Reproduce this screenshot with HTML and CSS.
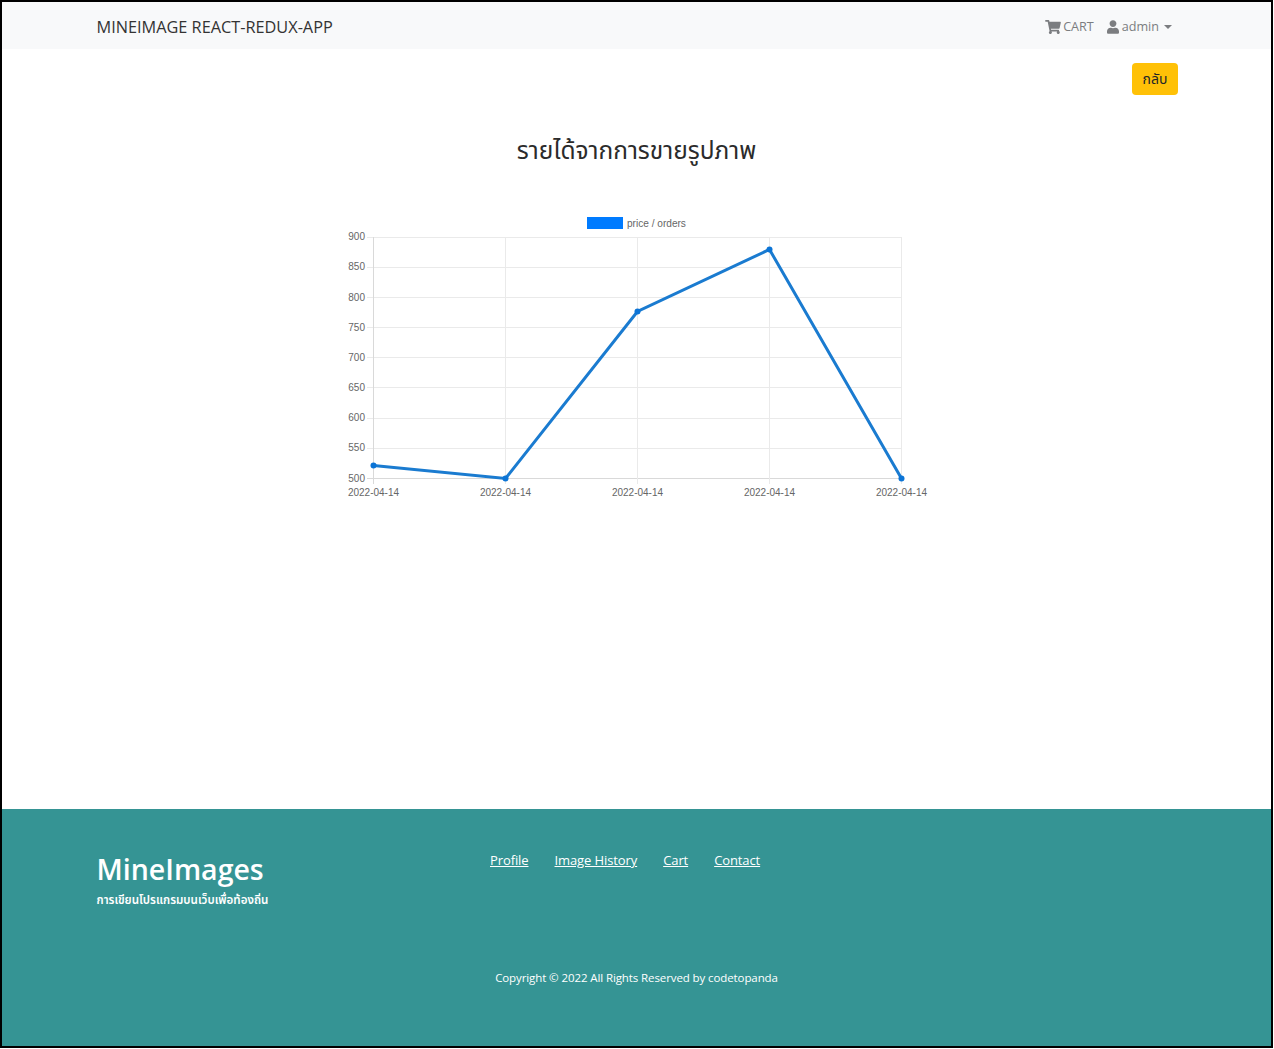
FILE: index.html
```html
<!DOCTYPE html>
<html>
  <head>
    <meta charset="UTF-8">
    <title>MineImages</title>
    <link rel="stylesheet" href="styles.css">
  </head>
  <body>
    <div class="frame">
      <nav class="navbar">
        <a class="brand" href="#">MINEIMAGE REACT-REDUX-APP</a>
        <div class="nav-links">
          <a class="nav-link" href="#">
            <svg class="nav-icon cart-icon" viewBox="0 0 576 512"><path fill="currentColor" d="M528.1 301.3l47.3-208C578.8 78.3 567.4 64 552 64H159.2l-9.2-44.8C147.8 8 137.9 0 126.5 0H24C10.7 0 0 10.7 0 24v16c0 13.3 10.7 24 24 24h69.9l70.2 343.4C147.300 417.100 136 435.200 136 456c0 30.900 25.100 56 56 56s56-25.100 56-56c0-15.700-6.400-29.800-16.800-40h209.600C430.400 426.200 424 440.300 424 456c0 30.900 25.100 56 56 56s56-25.100 56-56c0-22.200-12.900-41.300-31.600-50.400l5.500-24.300c3.400-15-8-29.300-23.400-29.300H218.100l-6.500-32h293.100c11.200 0 20.900-7.800 23.400-18.700z"/></svg>
            CART
          </a>
          <a class="nav-link" href="#">
            <svg class="nav-icon user-icon" viewBox="0 0 448 512"><path fill="currentColor" d="M224 256c70.700 0 128-57.300 128-128S294.700 0 224 0 96 57.300 96 128s57.300 128 128 128zm89.600 32h-16.700c-22.200 10.200-46.900 16-72.900 16s-50.600-5.800-72.900-16h-16.700C60.200 288 0 348.200 0 422.400V464c0 26.500 21.500 48 48 48h352c26.500 0 48-21.500 48-48v-41.600c0-74.200-60.200-134.400-134.400-134.400z"/></svg>
            admin
            <span class="caret"></span>
          </a>
        </div>
      </nav>

      <main class="content">
        <div class="back-row">
          <button class="btn-back">กลับ</button>
        </div>
        <h2 class="page-title">รายได้จากการขายรูปภาพ</h2>
        <svg class="chart" viewBox="0 0 600 300" width="600" height="300">
          <g class="legend">
            <rect x="253" y="4" width="36" height="12" fill="#007bff"/>
            <text class="legend-label" x="293" y="14">price / orders</text>
          </g>
          <g class="grid">
            <line x1="33" x2="567" y1="24.500" y2="24.500"/>
            <line x1="33" x2="567" y1="54.500" y2="54.500"/>
            <line x1="33" x2="567" y1="84.500" y2="84.500"/>
            <line x1="33" x2="567" y1="114.500" y2="114.500"/>
            <line x1="33" x2="567" y1="144.500" y2="144.500"/>
            <line x1="33" x2="567" y1="174.500" y2="174.500"/>
            <line x1="33" x2="567" y1="205.500" y2="205.500"/>
            <line x1="33" x2="567" y1="235.500" y2="235.500"/>
            <line class="axis" x1="33" x2="567" y1="265.500" y2="265.500"/>
            <line class="axis" x1="39.500" x2="39.500" y1="24" y2="271"/>
            <line x1="171.500" x2="171.500" y1="24" y2="271"/>
            <line x1="303.500" x2="303.500" y1="24" y2="271"/>
            <line x1="435.500" x2="435.500" y1="24" y2="271"/>
            <line x1="567.500" x2="567.500" y1="24" y2="271"/>
          </g>
          <g class="tick-labels y-labels">
            <text x="31" y="27">900</text>
            <text x="31" y="57">850</text>
            <text x="31" y="88">800</text>
            <text x="31" y="118">750</text>
            <text x="31" y="148">700</text>
            <text x="31" y="178">650</text>
            <text x="31" y="208">600</text>
            <text x="31" y="238">550</text>
            <text x="31" y="269">500</text>
          </g>
          <g class="tick-labels x-labels">
            <text x="39.500" y="283">2022-04-14</text>
            <text x="171.500" y="283">2022-04-14</text>
            <text x="303.500" y="283">2022-04-14</text>
            <text x="435.500" y="283">2022-04-14</text>
            <text x="567.500" y="283">2022-04-14</text>
          </g>
          <polyline class="line" points="39.500,252.500 171.500,265.500 303.500,98.500 435.500,36.500 567.500,265.500"/>
          <g class="points">
            <circle cx="39.500" cy="252.500" r="3"/>
            <circle cx="171.500" cy="265.500" r="3"/>
            <circle cx="303.500" cy="98.500" r="3"/>
            <circle cx="435.500" cy="36.500" r="3"/>
            <circle cx="567.500" cy="265.500" r="3"/>
          </g>
        </svg>
      </main>

      <footer class="footer">
        <div class="footer-top">
          <div class="footer-brand">
            <div class="footer-logo">MineImages</div>
            <div class="footer-tagline">การเขียนโปรแกรมบนเว็บเพื่อท้องถิ่น</div>
          </div>
          <div class="footer-links">
            <a href="#">Profile</a>
            <a href="#">Image History</a>
            <a href="#">Cart</a>
            <a href="#">Contact</a>
          </div>
        </div>
        <div class="copyright">Copyright © 2022 All Rights Reserved by codetopanda</div>
      </footer>
    </div>
  </body>
</html>
```

FILE: styles.css
```css
* {
  box-sizing: border-box;
}

html,
body {
  margin: 0;
  background: #fff;
}

body {
  font-family: "Open Sans", "Noto Sans", "Noto Sans Thai", sans-serif;
  color: #212529;
  height: 1049px;
  overflow: hidden;
}

.frame {
  height: 1048px;
  width: 1273px;
  border: 2px solid #000;
  display: flex;
  flex-direction: column;
}

/* navbar */
.navbar {
  height: 47px;
  background: #f8f9fa;
  display: flex;
  align-items: center;
  justify-content: space-between;
  padding: 2px 99px 0 94.500px;
}

.brand {
  font-size: 16.3px;
  color: #333;
  text-decoration: none;
}

.nav-links {
  display: flex;
  gap: 13px;
}

.nav-link {
  display: flex;
  align-items: center;
  font-size: 12.6px;
  color: #7b7d80;
  text-decoration: none;
}

.nav-icon {
  height: 14px;
  margin-right: 3px;
}

.cart-icon {
  width: 16px;
  margin-right: 2px;
}

.user-icon {
  width: 12px;
}

.caret {
  width: 0;
  height: 0;
  margin-left: 5px;
  border-top: 4px solid #7b7d80;
  border-left: 4px solid transparent;
  border-right: 4px solid transparent;
}

/* main */
.content {
  flex: 1;
  display: flex;
  flex-direction: column;
  align-items: center;
}

.back-row {
  align-self: stretch;
  display: flex;
  justify-content: flex-end;
  padding: 14px 93px 0 0;
}

.btn-back {
  width: 46px;
  height: 32px;
  padding: 0;
  background: #ffc107;
  border: none;
  border-radius: 4px;
  font-family: inherit;
  font-size: 14px;
  color: #212529;
}

.page-title {
  margin: 37px 0 0;
  height: 36px;
  font-size: 24.5px;
  line-height: 36px;
  font-weight: 400;
  color: #2b2b2b;
}

.chart {
  margin-top: 45px;
  margin-left: -5px;
}

.grid line {
  stroke: #eaeaea;
  stroke-width: 1;
}

.grid .axis {
  stroke: #d9d9d9;
}

.tick-labels text,
.legend-label {
  font-family: "Liberation Sans", sans-serif;
  font-size: 10px;
  fill: #666;
}

.legend-label {
  font-size: 10.1px;
}

.y-labels text {
  text-anchor: end;
}

.x-labels text {
  text-anchor: middle;
}

.line {
  fill: none;
  stroke: #1a7bd0;
  stroke-width: 3;
}

.points circle {
  fill: #0b74d6;
}

/* footer */
.footer {
  height: 237px;
  background: #359494;
  color: #fff;
  padding: 40px 94.500px 0;
  display: flex;
  flex-direction: column;
}

.footer-top {
  display: flex;
  height: 119px;
}

.footer-brand {
  width: 393.500px;
}

.footer-logo {
  font-size: 28.5px;
  line-height: 40px;
  font-weight: 600;
}

.footer-tagline {
  margin-top: 1px;
  font-size: 11.6px;
  line-height: 20px;
  font-weight: 600;
}

.footer-links {
  display: flex;
  gap: 26px;
  padding-top: 1px;
}

.footer-links a {
  font-size: 13px;
  letter-spacing: -0.1px;
  line-height: 20px;
  color: #fff;
}

.copyright {
  text-align: center;
  font-size: 11.5px;
  letter-spacing: -0.1px;
  line-height: 20px;
}
```
